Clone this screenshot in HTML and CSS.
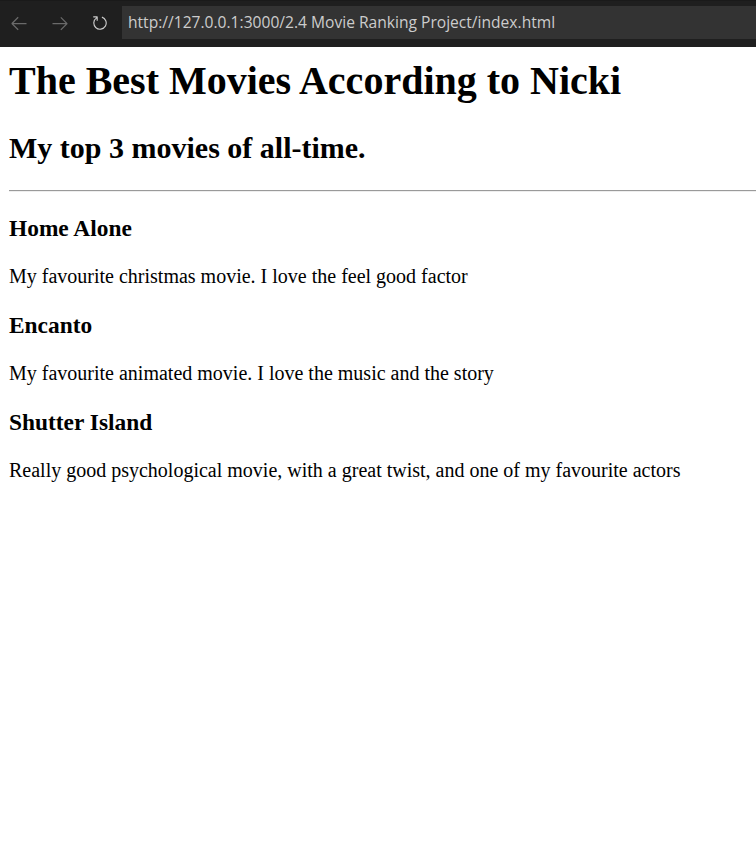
FILE: index.html
```html
<!DOCTYPE html>
<html>
<head>
<meta charset="utf-8">
<title>Movie Ranking</title>
<link rel="stylesheet" href="styles.css">
</head>
<body>
<div class="bar">
  <div class="nav">
    <svg class="icon dim" width="20" height="20" viewBox="0 0 16 16"><path fill="currentColor" d="M7 3.093l-5 5V8.8l5 5 .707-.707-4.146-4.147H14v-1H3.56L7.708 3.8 7 3.093z"/></svg>
    <svg class="icon dim" width="20" height="20" viewBox="0 0 16 16"><path fill="currentColor" d="M9 13.887l5-5V8.18l-5-5-.707.707 4.146 4.147H2v1h10.44L8.292 13.18l.707.707z"/></svg>
    <svg class="icon" width="18" height="18" viewBox="0 0 16 16"><path fill="currentColor" fill-rule="evenodd" d="M4.681 3H2V2h3.5l.5.5V6H5V4a5 5 0 1 0 4.53-.761l.302-.954A6 6 0 1 1 4.681 3z"/></svg>
  </div>
  <div class="url">http://127.0.0.1:3000/2.4 Movie Ranking Project/index.html</div>
</div>
<main class="page">
  <h1 class="title">The Best Movies According to Nicki</h1>
  <h2 class="subtitle">My top 3 movies of all-time.</h2>
  <hr class="rule">
  <h3 class="movie">Home Alone</h3>
  <p class="desc">My favourite christmas movie. I love the feel good factor</p>
  <h3 class="movie">Encanto</h3>
  <p class="desc">My favourite animated movie. I love the music and the story</p>
  <h3 class="movie">Shutter Island</h3>
  <p class="desc">Really good psychological movie, with a great twist, and one of my favourite actors</p>
</main>
</body>
</html>
```
FILE: styles.css
```css
html, body {
  margin: 0;
  padding: 0;
  background: #fff;
}
body {
  font-family: "Liberation Serif", "Times New Roman", serif;
  color: #000;
}
.bar {
  height: 47px;
  background: #1f1f1f;
  border-top: 1px solid #1a1a1a;
  box-sizing: border-box;
  display: flex;
  align-items: flex-start;
  padding-top: 5px;
}
.nav {
  width: 122px;
  display: flex;
  align-items: center;
  height: 33px;
  padding-left: 8.5px;
  gap: 21px;
  box-sizing: border-box;
}
.icon { color: #cccccc; display: block; }
.icon.dim { color: #6a6a6a; }
.url {
  flex: 1;
  height: 33px;
  background: #333333;
  color: #cccccc;
  font-family: "Open Sans", "Noto Sans", sans-serif;
  font-size: 15.6px;
  line-height: 33px;
  padding-left: 6px;
  white-space: nowrap;
  overflow: hidden;
}
.page {
  padding: 0 9px;
}
.title {
  font-size: 40px;
  margin: 10px 0 26.8px;
}
.subtitle {
  font-size: 30px;
  margin: 26.8px 0 24.9px;
}
.rule {
  margin: 0 -9px 0 0;
  border: 0;
  border-top: 1px solid #9a9a9a;
  border-bottom: 1px solid #eeeeee;
  height: 0;
}
.movie {
  font-size: 23.4px;
  margin: 23.4px 0;
}
.desc {
  font-size: 20px;
  margin: 20px 0;
}
```
